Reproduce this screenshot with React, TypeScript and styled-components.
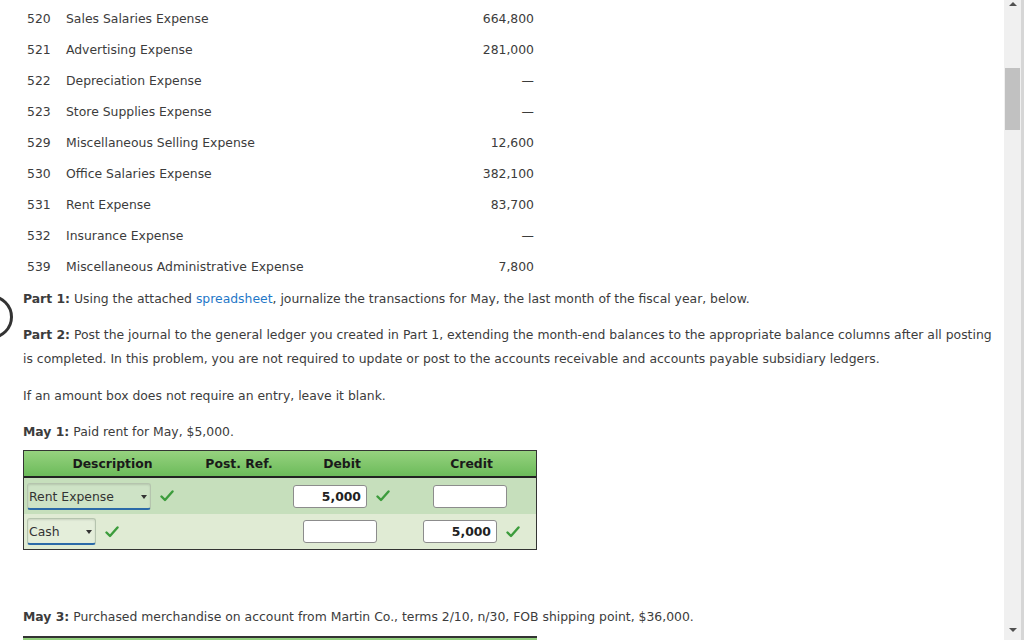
import React from "react";
import styled, { createGlobalStyle } from "styled-components";

const GlobalStyle = createGlobalStyle`
  html, body {
    margin: 0;
    padding: 0;
    background: #fff;
  }
  body {
    font-family: "DejaVu Sans", Verdana, sans-serif;
    font-size: 12.4px;
    color: #3c3c3c;
  }
`;

const Page = styled.div`
  display: flex;
  width: 1024px;
  height: 640px;
  overflow: hidden;
`;

const Main = styled.div`
  flex: 1;
  position: relative;
  padding: 3px 0 0 23px;
  overflow: hidden;
`;

const Ring = styled.div`
  position: absolute;
  left: -31px;
  top: 295px;
  width: 38px;
  height: 38px;
  border: 3px solid #333;
  border-radius: 50%;
`;

const Accounts = styled.div`
  display: grid;
  grid-template-columns: 43px 400px 68px;
  width: 511px;
`;

const AccNum = styled.div`
  height: 31px;
  line-height: 31px;
  padding-left: 4px;
`;

const AccName = styled.div`
  height: 31px;
  line-height: 31px;
`;

const AccAmount = styled.div`
  height: 31px;
  line-height: 31px;
  text-align: right;
`;

const Para = styled.p<{ $top: number }>`
  margin: ${(p) => p.$top}px 0 0;
  line-height: 24px;
  width: 975px;
`;

const Link = styled.span`
  color: #1f78c8;
`;

const Table = styled.div`
  margin-top: 6px;
  width: 512px;
  border: 1px solid #333;
`;

const Head = styled.div`
  display: grid;
  grid-template-columns: 177px 76px 130px 1fr;
  height: 25px;
  line-height: 25px;
  background: linear-gradient(#96d27f, #6cbb5a);
  border-bottom: 2px solid #222;
  font-weight: bold;
  color: #1a1a1a;
  text-align: center;
`;

const Row = styled.div<{ $bg: string; $h: number }>`
  display: grid;
  grid-template-columns: 177px 76px 130px 1fr;
  align-items: center;
  height: ${(p) => p.$h}px;
  background: ${(p) => p.$bg};
`;

const Cell = styled.div<{ $pad?: string }>`
  display: flex;
  align-items: center;
  padding: ${(p) => p.$pad || "0"};
`;

const Select = styled.div<{ $w: number }>`
  position: relative;
  width: ${(p) => p.$w}px;
  height: 27px;
  box-sizing: border-box;
  border: 1px solid #b5c4ae;
  border-radius: 3px;
  border-bottom: 2px solid #2b6aa8;
  background: rgba(255, 255, 255, 0.15);
  box-shadow: inset 0 1px 2px rgba(0, 0, 0, 0.12);
  padding-left: 1px;
  line-height: 25px;
  color: #333;
`;

const Caret = styled.span`
  position: absolute;
  right: 3px;
  top: 11px;
  width: 0;
  height: 0;
  border-left: 3px solid transparent;
  border-right: 3px solid transparent;
  border-top: 4px solid #333;
`;

const Input = styled.div`
  width: 74px;
  height: 23px;
  box-sizing: border-box;
  border: 1px solid #8c8c8c;
  border-radius: 3px;
  background: #fff;
  text-align: right;
  padding-right: 5px;
  line-height: 21px;
  font-weight: bold;
  color: #222;
`;

const CheckBox = styled.span`
  display: inline-flex;
  margin-left: 9px;
`;

const NextTable = styled.div`
  margin-top: 7px;
  width: 514px;
  height: 10px;
  border-top: 2px solid #333;
  background: linear-gradient(#96d27f, #6cbb5a);
`;

const Scrollbar = styled.div`
  width: 17px;
  height: 640px;
  background: #f0f0f0;
  border-right: 3px solid #d6d6d6;
  display: flex;
  flex-direction: column;
  align-items: center;
`;

const Arrow = styled.div<{ $up?: boolean }>`
  width: 0;
  height: 0;
  margin-top: ${(p) => (p.$up ? "2px" : "0")};
  border-left: 4px solid transparent;
  border-right: 4px solid transparent;
  ${(p) => (p.$up ? "border-bottom: 4px solid #505050;" : "border-top: 4px solid #505050;")}
`;

const Thumb = styled.div`
  width: 15px;
  height: 62px;
  margin-top: 62px;
  background: #c1c1c1;
`;

const Spacer = styled.div`
  flex: 1;
`;

const BottomGap = styled.div`
  height: 8px;
`;

function Check() {
  return (
    <CheckBox>
      <svg width="14" height="12" viewBox="0 0 14 12">
        <path d="M1.5 6.5 L5 10 L12.5 1.5" fill="none" stroke="#3c9c3c" strokeWidth="2.4" strokeLinecap="round" strokeLinejoin="round" />
      </svg>
    </CheckBox>
  );
}

const accounts = [
  ["520", "Sales Salaries Expense", "664,800"],
  ["521", "Advertising Expense", "281,000"],
  ["522", "Depreciation Expense", "—"],
  ["523", "Store Supplies Expense", "—"],
  ["529", "Miscellaneous Selling Expense", "12,600"],
  ["530", "Office Salaries Expense", "382,100"],
  ["531", "Rent Expense", "83,700"],
  ["532", "Insurance Expense", "—"],
  ["539", "Miscellaneous Administrative Expense", "7,800"],
];

export default function App() {
  return (
    <Page>
      <GlobalStyle />
      <Main>
        <Ring />
        <Accounts>
          {accounts.map(([n, name, amt]) => (
            <React.Fragment key={n}>
              <AccNum>{n}</AccNum>
              <AccName>{name}</AccName>
              <AccAmount>{amt}</AccAmount>
            </React.Fragment>
          ))}
        </Accounts>
        <Para $top={5}>
          <b>Part 1:</b> Using the attached <Link>spreadsheet</Link>, journalize the transactions for May, the last month of the fiscal year, below.
        </Para>
        <Para $top={12}>
          <b>Part 2:</b> Post the journal to the general ledger you created in Part 1, extending the month-end balances to the appropriate balance columns after all posting is completed. In this problem, you are not required to update or post to the accounts receivable and accounts payable subsidiary ledgers.
        </Para>
        <Para $top={13}>If an amount box does not require an entry, leave it blank.</Para>
        <Para $top={12}>
          <b>May 1:</b> Paid rent for May, $5,000.
        </Para>
        <Table>
          <Head>
            <div>Description</div>
            <div>Post. Ref.</div>
            <div>Debit</div>
            <div>Credit</div>
          </Head>
          <Row $bg="#c6dfbc" $h={36}>
            <Cell $pad="0 0 0 3px">
              <Select $w={124}>
                Rent Expense
                <Caret />
              </Select>
              <Check />
            </Cell>
            <Cell />
            <Cell $pad="0 0 0 16px">
              <Input>5,000</Input>
              <Check />
            </Cell>
            <Cell $pad="0 0 0 26px">
              <Input />
            </Cell>
          </Row>
          <Row $bg="#e0ebd4" $h={35}>
            <Cell $pad="0 0 0 3px">
              <Select $w={69}>
                Cash
                <Caret />
              </Select>
              <Check />
            </Cell>
            <Cell />
            <Cell $pad="0 0 0 26px">
              <Input />
            </Cell>
            <Cell $pad="0 0 0 16px">
              <Input>5,000</Input>
              <Check />
            </Cell>
          </Row>
        </Table>
        <Para $top={55}>
          <b>May 3:</b> Purchased merchandise on account from Martin Co., terms 2/10, n/30, FOB shipping point, $36,000.
        </Para>
        <NextTable />
      </Main>
      <Scrollbar>
        <Arrow $up />
        <Thumb />
        <Spacer />
        <Arrow />
        <BottomGap />
      </Scrollbar>
    </Page>
  );
}
